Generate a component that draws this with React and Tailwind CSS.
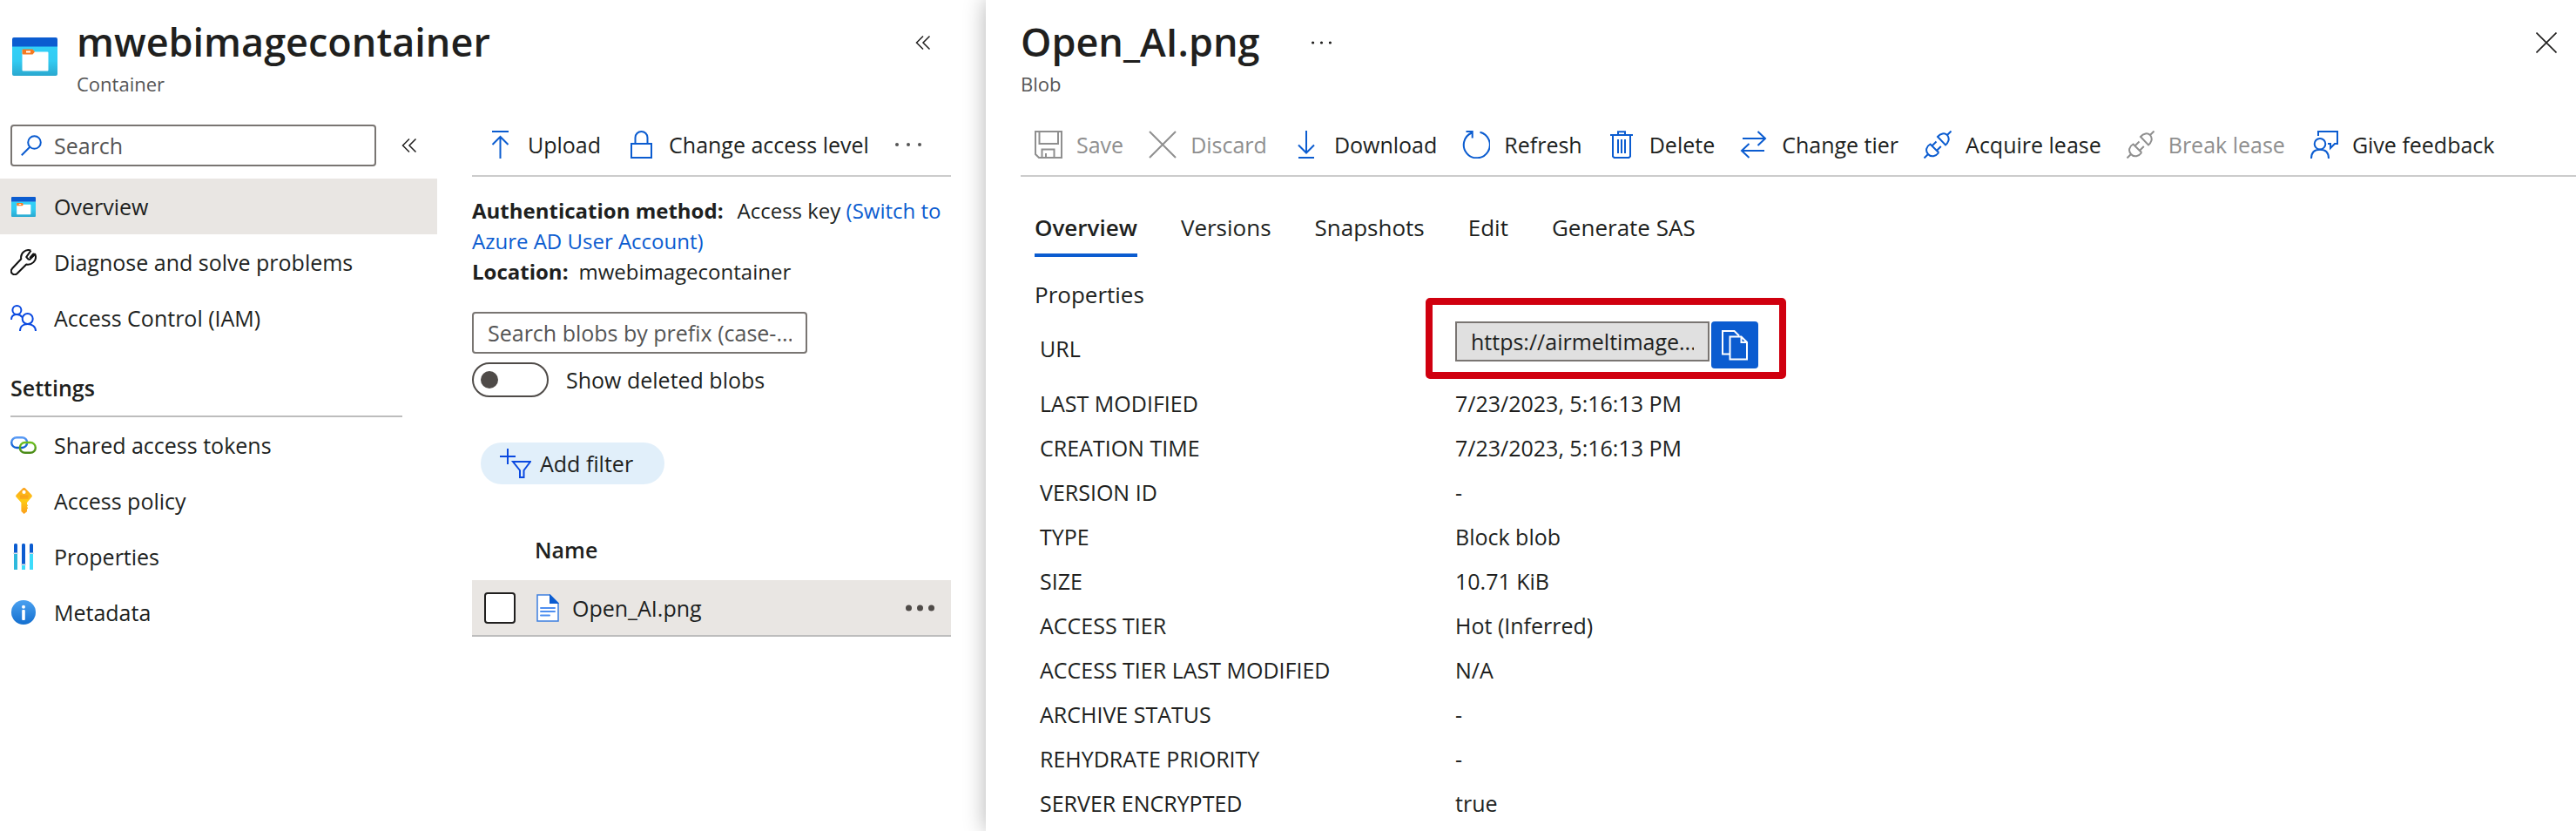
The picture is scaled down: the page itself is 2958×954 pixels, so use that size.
const blue = "#0b5cd0";

function ContainerIcon({ className }) {
  return (
    <svg viewBox="0 0 52 44" className={className} aria-hidden="true" preserveAspectRatio="none">
      <defs>
        <linearGradient id="containerBody" x1="0" y1="0" x2="0" y2="1">
          <stop offset="0" stopColor="#32d0f8" />
          <stop offset="0.5" stopColor="#32cbf2" />
          <stop offset="1" stopColor="#2aa8cf" />
        </linearGradient>
      </defs>
      <path d="M0 10h52v32a2 2 0 0 1-2 2H2a2 2 0 0 1-2-2z" fill="url(#containerBody)" />
      <path d="M2 0h48a2 2 0 0 1 2 2v8.500H0V2a2 2 0 0 1 2-2z" fill={blue} />
      <path d="M12.500 14h11l2.500 2.500h14.500a1 1 0 0 1 1 1V37.500a1 1 0 0 1-1 1h-28a1 1 0 0 1-1-1V15a1 1 0 0 1 1-1z" fill="#fff" />
      <path d="M12.500 13.500h11l2.500 3-2.500 3h-11a1 1 0 0 1-1-1v-4a1 1 0 0 1 1-1z" fill="#f6791f" />
      <path d="M16 15.500h5v2h-5z" fill="#fff" />
    </svg>
  );
}

function Stroke({ w, h, className, color, width = 2, children }) {
  return (
    <svg
      viewBox={`0 0 ${w} ${h}`}
      width={w}
      height={h}
      fill="none"
      stroke={color || "currentColor"}
      strokeWidth={width}
      className={className}
      aria-hidden="true"
    >
      {children}
    </svg>
  );
}

const Chevrons = () => (
  <Stroke w={18} h={18} width={1.5}>
    <path d="M9 1.500L1.500 9L9 16.500M16.500 1.500L9 9l7.500 7.500" />
  </Stroke>
);

const Dots = ({ w, r }) => (
  <svg viewBox={`0 0 ${w} 10`} width={w} height={10} fill="currentColor" aria-hidden="true">
    <circle cx={r} cy="5" r={r} />
    <circle cx={w / 2} cy="5" r={r} />
    <circle cx={w - r} cy="5" r={r} />
  </svg>
);

const SearchIcon = () => (
  <Stroke w={24} h={24} color={blue}>
    <circle cx="15.500" cy="8.500" r="7.300" />
    <path d="M10.300 13.700L.8 23.200" />
  </Stroke>
);

const WrenchIcon = () => (
  <Stroke w={30} h={30} color="#111">
    <path
      strokeLinejoin="round"
      d="M23.500 1.600C20.800.6 17.500 1 15 3.200c-2.600 2.300-3.300 5-2.700 8L2 22.300c-1.600 1.900-1.400 4.300 0 5.700 1.600 1.500 4 1.500 5.700 0l10.500-10.500c3.200.5 6-.3 8.200-2.400 2.600-2.500 3.200-6 1.900-9.200l-6 6-1.800-.4-2.300-2.400 5.300-7.500M28.300 5.900l-2-.4-4.100 4.700"
    />
  </Stroke>
);

const PeopleIcon = () => (
  <Stroke w={30} h={30} color="#0a49e0">
    <circle cx="7.400" cy="6" r="5" />
    <circle cx="19.700" cy="16" r="6" />
    <path d="M1 17c0-4 2.800-6 6.400-6 2.600 0 4.800 1.200 6 3.200M11 30c0-5.500 4-8 8.700-8s9.300 2.500 9.300 8" />
  </Stroke>
);

const LinkIcon = () => (
  <svg viewBox="0 0 30 20" width="30" height="20" fill="none" strokeWidth="2.400" aria-hidden="true">
    <defs>
      <linearGradient id="linkBlue" x1="0" y1="0" x2="0" y2="1">
        <stop offset="0" stopColor="#5a9bf5" />
        <stop offset="1" stopColor="#0b5cd0" />
      </linearGradient>
      <linearGradient id="linkGreen" x1="0" y1="0" x2="0" y2="1">
        <stop offset="0" stopColor="#6cbf20" />
        <stop offset="1" stopColor="#4a8a18" />
      </linearGradient>
    </defs>
    <rect x="1.200" y="1.200" width="18" height="11.800" rx="5.900" stroke="url(#linkBlue)" />
    <rect x="10.800" y="7" width="18" height="11.800" rx="5.900" stroke="url(#linkGreen)" />
  </svg>
);

const KeyIcon = () => (
  <svg viewBox="0 0 19 30" width="19" height="30" aria-hidden="true">
    <defs>
      <linearGradient id="keyFill" x1="0" y1="0" x2="0" y2="1">
        <stop offset="0" stopColor="#fba01c" />
        <stop offset="0.5" stopColor="#fecb14" />
        <stop offset="1" stopColor="#fb9d1c" />
      </linearGradient>
    </defs>
    <path
      fill="url(#keyFill)"
      fillRule="evenodd"
      d="M8.200.6a2 2 0 0 1 2.800 0l7.200 7.400a2 2 0 0 1 0 2.800L13 17v2l1.200 1.300L13 21.800l1.200 1.400L13 24.800v2.400L9.600 30 6.400 27V17L.8 10.800a2 2 0 0 1 0-2.800zM9.500 2.800a2.100 2.100 0 1 0 0 4.200 2.100 2.100 0 0 0 0-4.200z"
    />
    <path d="M5 9.500h9.500M5 11.800h9.500" stroke="#f78d1e" strokeWidth="1" />
  </svg>
);

const SlidersIcon = () => (
  <svg viewBox="0 0 24 30" width="24" height="30" aria-hidden="true">
    <path d="M1 11h4v19H1zM10 24.500h4V30h-4zM19 11h4v19h-4z" fill="#3ddcfb" />
    <path d="M1 11h4v19H1z" fill="#2fb9dc" />
    <path d="M1 1.500Q1 0 2.500 0h1Q5 0 5 1.500V11H1zM10 1.500Q10 0 11.500 0h1Q14 0 14 1.500V24h-4zM19 1.500Q19 0 20.500 0h1Q23 0 23 1.500V11h-4z" fill={blue} />
    <path d="M0 10.500h6v1.600H0zM9 23.500h6v1.600H9zM18 10.500h6v1.600h-6z" fill="#d8e2ea" />
  </svg>
);

const InfoIcon = () => (
  <svg viewBox="0 0 28 28" width="28" height="28" aria-hidden="true">
    <defs>
      <linearGradient id="infoFill" x1="0" y1="0" x2="0" y2="1">
        <stop offset="0" stopColor="#4aa1f0" />
        <stop offset="1" stopColor="#146fcf" />
      </linearGradient>
    </defs>
    <circle cx="14" cy="14" r="14" fill="url(#infoFill)" />
    <circle cx="14" cy="7.700" r="2" fill="#fff" />
    <rect x="12.200" y="11" width="3.600" height="12" rx="1" fill="#fff" />
  </svg>
);

const UploadIcon = () => (
  <Stroke w={32} h={32} color={blue}>
    <path d="M7 1h19M16.500 32V7M7.500 16l9-9 9 9" />
  </Stroke>
);
const LockIcon = () => (
  <Stroke w={32} h={32} color={blue}>
    <path d="M5 15h23v16H5zM9.500 15V8a7 7 0 0 1 14 0v7" />
  </Stroke>
);
const SaveIcon = () => (
  <Stroke w={32} h={32} color="#8f8f8f">
    <path d="M1 1h30v30H5l-4-4zM5.500 1v14h21.500V1M8.500 31V21.500h14V31M13 26v5" />
  </Stroke>
);
const DiscardIcon = () => (
  <Stroke w={32} h={32} color="#8f8f8f">
    <path d="M1 1l30 30M31 1L1 31" />
  </Stroke>
);
const DownloadIcon = () => (
  <Stroke w={32} h={32} color={blue}>
    <path d="M7 31h18M16 0v25M7 16.500l9 9 9-9" />
  </Stroke>
);
const RefreshIcon = () => (
  <Stroke w={32} h={32} color={blue}>
    <path d="M20.500 1.800A15 15 0 1 1 11 2.500M4.500 1h7.200v7.500" />
  </Stroke>
);
const DeleteIcon = () => (
  <Stroke w={32} h={32} color={blue}>
    <path d="M3 5h26M12 5V1.200h8V5M6 5v24.500l1.500 1.500h17l1.500-1.500V5M12 10v16M16 10v16M20 10v16" />
  </Stroke>
);
const TierIcon = () => (
  <Stroke w={32} h={32} color={blue}>
    <path d="M3 9h26M20.500 1l8.500 8-8.500 8M28 23H2M10.500 15L2 23l8.500 8" />
  </Stroke>
);
const PlugIcon = ({ color }) => (
  <Stroke w={32} h={32} color={color}>
    <path d="M16 7l9 9.500c3-2.500 5.300-7 2.300-11S19 3.500 16 7zM27 5l4.500-4.500M7 15l10.500 10.500M7.500 15.500C3 18 1.500 23 5 27s9 2.500 12-1.500M5 27L.5 31.500M9.500 17.500l5-5M14.800 23l5-5" />
  </Stroke>
);
const FeedbackIcon = () => (
  <Stroke w={32} h={32} color={blue}>
    <path d="M9 6V1h22v14h-3l-5 5v-5h-3M1 32c0-7 4-10.300 10-10.300S21 25 21 32" />
    <circle cx="11" cy="15.200" r="6.300" />
  </Stroke>
);
const FilterIcon = () => (
  <Stroke w={36} h={34} color="#0a49e0">
    <path d="M9 0v18M0 9h18M15 15h20l-7.500 10v8h-4.500v-8z" />
  </Stroke>
);
const FileIcon = () => (
  <svg viewBox="0 0 26 32" width="26" height="32" aria-hidden="true">
    <path d="M1 1h14.500L25 10.500V31H1z" fill="#fff" stroke="#3c7fe0" strokeWidth="1.500" />
    <path d="M15 0l11 11H15z" fill={blue} />
    <path d="M5 16h16M5 20h16M5 24.500h10" stroke="#4f8ff0" strokeWidth="2" strokeLinecap="round" />
  </svg>
);
const CopyIcon = () => (
  <Stroke w={32} h={36} color="#fff">
    <path d="M10 28.500H2V2h13.500l5.500 5.500" />
    <path d="M10.500 8.500h13l6.500 6.500v19.500H10.500zM23.500 8.500V15H30" />
  </Stroke>
);
const CloseIcon = () => (
  <Stroke w={24} h={24} width={1.6}>
    <path d="M.5.5l23 23M23.500.5l-23 23" />
  </Stroke>
);

const navMain = [
  { label: "Overview", icon: <ContainerIcon className="h-[23px] w-7" />, active: true },
  { label: "Diagnose and solve problems", icon: <WrenchIcon /> },
  { label: "Access Control (IAM)", icon: <PeopleIcon /> },
];
const navSettings = [
  { label: "Shared access tokens", icon: <LinkIcon /> },
  { label: "Access policy", icon: <KeyIcon /> },
  { label: "Properties", icon: <SlidersIcon /> },
  { label: "Metadata", icon: <InfoIcon /> },
];
const commands = [
  { label: "Save", icon: <SaveIcon />, disabled: true },
  { label: "Discard", icon: <DiscardIcon />, disabled: true },
  { label: "Download", icon: <DownloadIcon /> },
  { label: "Refresh", icon: <RefreshIcon /> },
  { label: "Delete", icon: <DeleteIcon /> },
  { label: "Change tier", icon: <TierIcon /> },
  { label: "Acquire lease", icon: <PlugIcon color={blue} /> },
  { label: "Break lease", icon: <PlugIcon color="#8f8f8f" />, disabled: true },
  { label: "Give feedback", icon: <FeedbackIcon /> },
];
const properties = [
  ["LAST MODIFIED", "7/23/2023, 5:16:13 PM"],
  ["CREATION TIME", "7/23/2023, 5:16:13 PM"],
  ["VERSION ID", "-"],
  ["TYPE", "Block blob"],
  ["SIZE", "10.71 KiB"],
  ["ACCESS TIER", "Hot (Inferred)"],
  ["ACCESS TIER LAST MODIFIED", "N/A"],
  ["ARCHIVE STATUS", "-"],
  ["REHYDRATE PRIORITY", "-"],
  ["SERVER ENCRYPTED", "true"],
];

function NavList({ items }) {
  return (
    <ul>
      {items.map(({ label, icon, active }) => (
        <li key={label}>
          <a href="#" className={`flex h-16 items-center pl-3 ${active ? "bg-[#e9e6e3]" : ""}`}>
            <span className="flex w-[50px] shrink-0">
              <span className="flex w-[30px] justify-center">{icon}</span>
            </span>
            {label}
          </a>
        </li>
      ))}
    </ul>
  );
}

function Command({ label, icon, disabled }) {
  return (
    <button type="button" disabled={disabled} className="flex shrink-0 items-center gap-4 disabled:text-[#8f8f8f]">
      {icon}
      {label}
    </button>
  );
}

function Sidebar() {
  return (
    <nav className="w-[502px] shrink-0 pt-3">
      <div className="mb-[14px] flex items-center pl-3">
        <label className="flex h-12 w-[420px] items-center gap-[14px] rounded border-2 border-[#797572] pl-[10px]">
          <SearchIcon />
          <input
            type="search"
            aria-label="Search"
            placeholder="Search"
            className="min-w-0 flex-1 bg-transparent outline-none placeholder:text-[#555]"
          />
        </label>
        <button type="button" aria-label="Collapse menu" className="ml-[29px]">
          <Chevrons />
        </button>
      </div>
      <NavList items={navMain} />
      <h2 className="mr-10 ml-3 border-b-2 border-[#bdbdbd] pt-8 pb-4 leading-8 font-semibold">Settings</h2>
      <NavList items={navSettings} />
    </nav>
  );
}

function BlobList() {
  return (
    <section className="min-w-0 flex-1 px-10">
      <div className="flex h-[72px] items-center gap-[30px] border-b-2 border-[#ccc] pl-4">
        <Command label="Upload" icon={<UploadIcon />} />
        <Command label="Change access level" icon={<LockIcon />} />
        <button type="button" aria-label="More commands" className="text-[#555]">
          <Dots w={30} r={2} />
        </button>
      </div>

      <div className="mt-[21px] text-2xl leading-[35px]">
        <p>
          <b className="mr-4">Authentication method:</b>
          Access key{" "}
          <a href="#" className="text-[#0b5cd0]">
            (Switch to Azure AD User Account)
          </a>
        </p>
        <p>
          <b className="mr-3">Location:</b>
          mwebimagecontainer
        </p>
      </div>

      <input
        type="text"
        aria-label="Search blobs by prefix"
        placeholder="Search blobs by prefix (case-..."
        className="mt-[29px] block h-12 w-[385px] rounded border-2 border-[#797572] px-4 outline-none placeholder:text-[#555]"
      />

      <label className="mt-[10px] flex items-center gap-5">
        <input
          type="checkbox"
          role="switch"
          className="h-10 w-[88px] appearance-none rounded-full border-2 border-[#4f4b48] bg-white p-2 before:block before:size-5 before:rounded-full before:bg-[#4f4b48]"
        />
        Show deleted blobs
      </label>

      <button type="button" className="mt-[52px] ml-[10px] flex h-12 items-center gap-[10px] rounded-full bg-[#e1effa] pr-9 pl-[22px]">
        <FilterIcon />
        Add filter
      </button>

      <table className="mt-10 w-full border-collapse text-left">
        <thead>
          <tr className="h-[70px]">
            <th className="w-[72px]" aria-label="Select" />
            <th className="font-semibold">Name</th>
            <th className="w-[60px]" aria-label="Actions" />
          </tr>
        </thead>
        <tbody>
          <tr className="h-16 border-b-2 border-[#bdbdbd] bg-[#e9e6e3]">
            <td className="pl-[14px]">
              <input
                type="checkbox"
                aria-label="Select Open_AI.png"
                className="block size-9 appearance-none rounded border-2 border-[#201f1e] bg-white"
              />
            </td>
            <td>
              <a href="#" className="flex items-center gap-[15px] pl-[2px]">
                <FileIcon />
                Open_AI.png
              </a>
            </td>
            <td>
              <button type="button" aria-label="Row actions" className="ml-2 block text-[#4f4b48]">
                <Dots w={33} r={3.5} />
              </button>
            </td>
          </tr>
        </tbody>
      </table>
    </section>
  );
}

function ContainerBlade() {
  return (
    <div className="w-[1132px] shrink-0">
      <header className="flex h-[131px] items-start pt-[18px] pl-[14px]">
        <ContainerIcon className="mt-[25px] h-11 w-[52px]" />
        <div className="ml-[22px] flex-1">
          <h1 className="text-[45px] leading-[60px] font-semibold">mwebimagecontainer</h1>
          <p className="mt-[2px] text-[22px] leading-8 text-[#555]">Container</p>
        </div>
        <button type="button" aria-label="Collapse" className="mt-[22px] mr-[63px]">
          <Chevrons />
        </button>
      </header>
      <div className="flex">
        <Sidebar />
        <BlobList />
      </div>
    </div>
  );
}

function BlobBlade() {
  return (
    <main className="min-w-0 flex-1 bg-white pl-10 shadow-[0_0_24px_rgba(0,0,0,0.3)]">
      <header className="flex h-[131px] items-start pt-[18px]">
        <div>
          <h1 className="text-[45px] leading-[60px] font-semibold">Open_AI.png</h1>
          <p className="mt-[2px] text-[22px] leading-8 text-[#555]">Blob</p>
        </div>
        <button type="button" aria-label="More" className="mt-[26px] ml-[60px]">
          <Dots w={23} r={1.6} />
        </button>
        <button type="button" aria-label="Close" className="mt-[19px] mr-[22px] ml-auto">
          <CloseIcon />
        </button>
      </header>

      <div className="flex h-[72px] items-center gap-[29px] border-b-2 border-[#ccc] pl-4">
        {commands.map((c) => (
          <Command key={c.label} {...c} />
        ))}
      </div>

      <div className="pl-4">
        <div role="tablist" className="mt-10 flex gap-[50px] text-[26px] leading-9">
          {["Overview", "Versions", "Snapshots", "Edit", "Generate SAS"].map((tab, i) => (
            <button
              key={tab}
              type="button"
              role="tab"
              aria-selected={i === 0}
              className="border-b-4 border-transparent pb-3 aria-selected:border-[#0b5cd0] aria-selected:font-semibold"
            >
              {tab}
            </button>
          ))}
        </div>

        <h2 className="mt-[25px] text-[26px] leading-9">Properties</h2>
        <table className="mt-[7px] w-full table-fixed border-collapse text-left leading-8">
          <tbody>
            <tr className="h-[74px]">
              <th scope="row" className="w-[483px] pl-[6px] font-normal">
                URL
              </th>
              <td className="pt-[6px] align-top">
                <div className="relative flex w-fit items-start gap-[2px]">
                  <input
                    type="text"
                    readOnly
                    aria-label="URL"
                    value="https://airmeltimage..."
                    className="h-[46px] w-[292px] border-2 border-[#797572] bg-[#e0e0e0] px-4 outline-none"
                  />
                  <button type="button" aria-label="Copy URL" className="flex size-[54px] items-center justify-center rounded bg-[#0b5cd0]">
                    <CopyIcon />
                  </button>
                  <div className="pointer-events-none absolute -top-[27px] -right-8 -bottom-3 -left-[34px] rounded-[5px] border-8 border-[#d0000f]" />
                </div>
              </td>
            </tr>
            {properties.map(([name, value]) => (
              <tr key={name} className="h-[51px]">
                <th scope="row" className="pl-[6px] font-normal">
                  {name}
                </th>
                <td>{value}</td>
              </tr>
            ))}
          </tbody>
        </table>
      </div>
    </main>
  );
}

export default function App() {
  return (
    <div className="flex min-h-screen bg-white font-['Open_Sans',sans-serif] text-[25px] leading-8 text-[#201f1e]">
      <ContainerBlade />
      <BlobBlade />
    </div>
  );
}
